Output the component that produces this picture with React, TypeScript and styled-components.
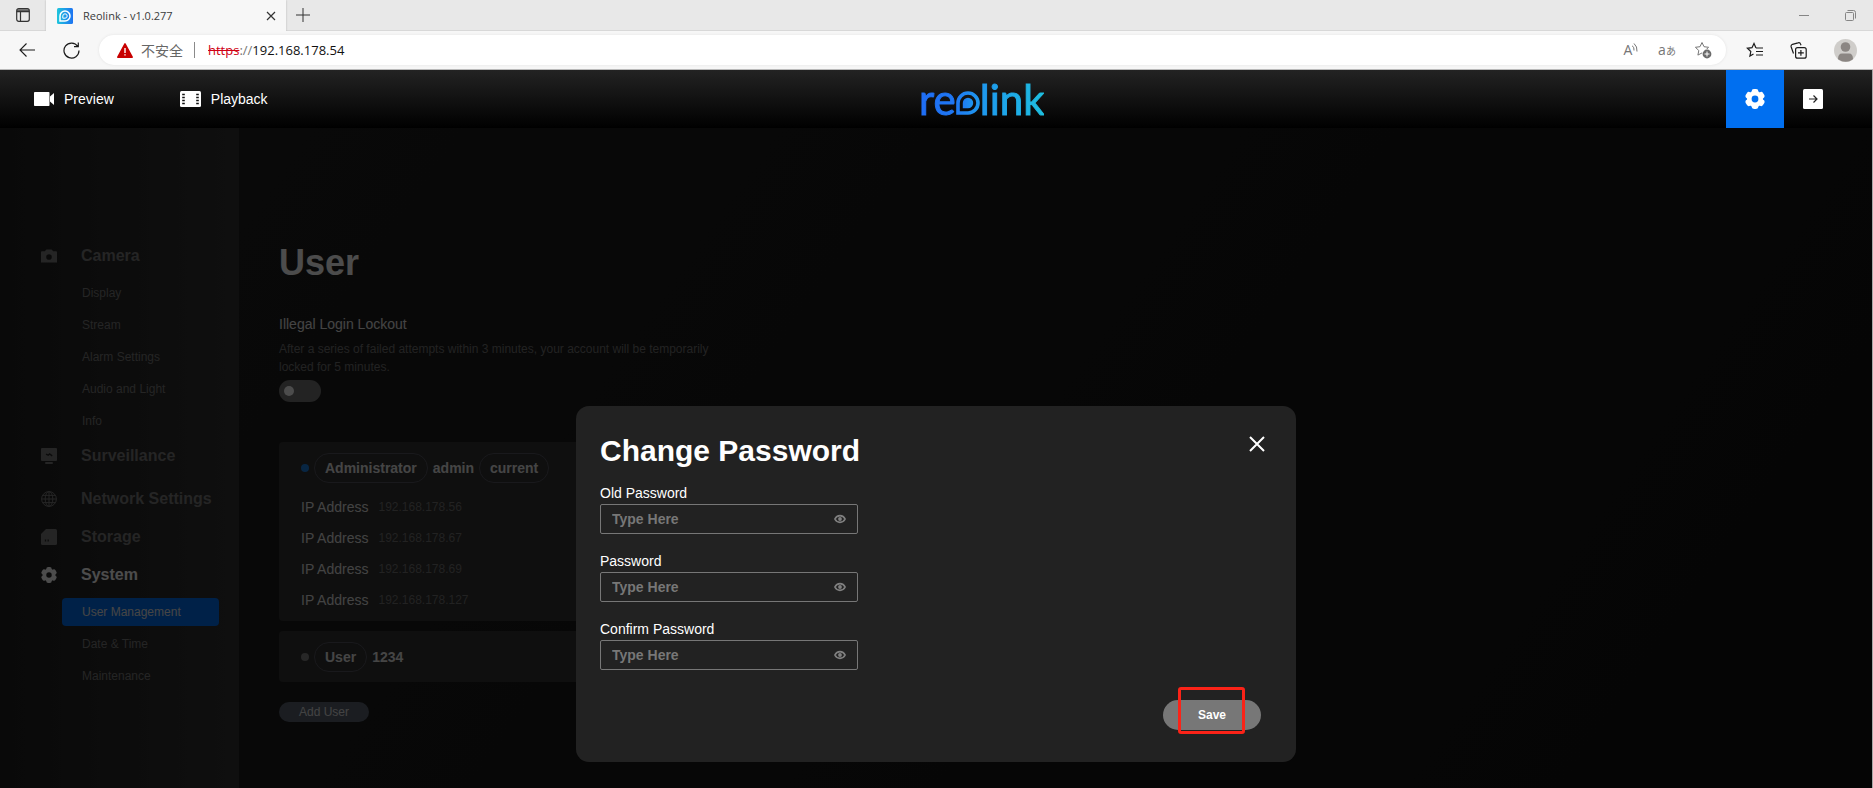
import React, { useId, useState } from "react";
import styled, { createGlobalStyle } from "styled-components";

const UI_FONT = '"Open Sans", "Noto Sans CJK SC", sans-serif';
const APP_FONT = '"Liberation Sans", Arial, sans-serif';

const GlobalStyle = createGlobalStyle`
  *, *::before, *::after { box-sizing: border-box; }
  body { margin: 0; background: #1c1c1c; font-family: ${APP_FONT}; }
  button, input { font-family: inherit; margin: 0; }
  h1, h2, p, ul { margin: 0; padding: 0; }
  li { list-style: none; }
  svg { display: block; flex: none; }
`;

const Window = styled.div`
  display: flex;
  flex-direction: column;
  min-height: 100vh;
`;

const Viewport = styled.div`
  flex: 1;
  display: flex;
  flex-direction: column;
  border-right: 1px solid #a8a8a8;
`;

const PlainButton = styled.button`
  display: flex;
  align-items: center;
  justify-content: center;
  padding: 0;
  border: 0;
  background: none;
  color: inherit;
`;

/* ---------- browser frame ---------- */

const TabStrip = styled.div`
  display: flex;
  height: 31px;
  background: #e8e8e8;
  box-shadow: inset 0 -1px #d8d8d8;
  font-family: ${UI_FONT};
  color: #3b3b3b;
`;

const StripButton = styled(PlainButton)<{ $width: number }>`
  width: ${(p) => p.$width}px;
  height: 30px;
`;

const Tab = styled.div`
  display: flex;
  align-items: center;
  gap: 10px;
  width: 240px;
  padding: 0 10px 0 11px;
  background: #f7f7f7;
  box-shadow: 0 0 2px #b4b4b4;
  clip-path: inset(0 -2px);
`;

const TabTitle = styled.span`
  flex: 1;
  font-size: 11px;
  line-height: 16px;
`;

const WindowControls = styled.div`
  display: flex;
  margin-left: auto;
  color: #858585;
`;

const Toolbar = styled.div`
  display: flex;
  align-items: center;
  height: 39px;
  padding-right: 3px;
  background: #f7f7f7;
  border-bottom: 1px solid #b9b9b9;
  font-family: ${UI_FONT};
  color: #1b1b1b;
`;

const ToolButton = styled(PlainButton)<{ $width?: number }>`
  width: ${(p) => p.$width ?? 44}px;
  height: 30px;
`;

const AddressBar = styled.div`
  display: flex;
  align-items: center;
  flex: 1;
  height: 30px;
  margin: 0 6px 0 10px;
  padding: 0 5px 0 18px;
  border-radius: 15px;
  background: #fff;
  box-shadow: 0 0 3px #e2e2e2;
  font-size: 13px;
  line-height: 18px;
  color: #767676;
`;

const Warning = styled.span`
  margin-left: 8px;
  padding-right: 11px;
  border-right: 1px solid #8a8a8a;
  font-family: "Noto Sans CJK SC", sans-serif;
  font-size: 14px;
  line-height: 16px;
  color: #666;
`;

const Url = styled.span`
  flex: 1;
  margin-left: 13px;
  color: #111;

  s { color: #d00014; }
  i { font-style: normal; color: #767676; }
`;

const Glyph = styled.span`
  font-size: 14px;
  line-height: 18px;

  small {
    font-family: "Noto Sans CJK JP", sans-serif;
    font-size: 10px;
  }
`;

/* ---------- application header ---------- */

const Header = styled.header`
  display: flex;
  align-items: center;
  height: 58px;
  padding: 0 30px 0 34px;
  background: linear-gradient(#232323, #000);
  color: #fff;
`;

const HeaderNav = styled.nav`
  display: flex;
  gap: 66px;
`;

const HeaderLink = styled.a`
  display: flex;
  align-items: center;
  gap: 10px;
  color: #fff;
  font-size: 14px;
  line-height: 20px;
  text-decoration: none;
`;

const Brand = styled.div`
  flex: 1;
  display: flex;
  align-items: baseline;
  justify-content: center;
  padding-right: 30px;
  font-family: Lato, sans-serif;
  font-size: 42px;
  line-height: 42px;
`;

const BrandText = styled.span<{ $from: string; $to: string }>`
  background: linear-gradient(90deg, ${(p) => p.$from}, ${(p) => p.$to});
  background-clip: text;
  color: transparent;
  -webkit-text-stroke: 1px transparent;
`;

const HeaderButton = styled(PlainButton)<{ $active?: boolean }>`
  width: 58px;
  height: 58px;
  background: ${(p) => (p.$active ? "#006ff0" : "none")};
`;

/* ---------- settings page ---------- */

const Body = styled.div`
  position: relative;
  flex: 1;
  display: flex;
  background: linear-gradient(125deg, #202020, #111);
`;

const Sidebar = styled.nav`
  flex: none;
  width: 239px;
  padding: 109px 20px 0 0;
  background: linear-gradient(90deg, #202020, #333);
`;

const Group = styled.section<{ $spaced?: boolean }>`
  padding-bottom: ${(p) => (p.$spaced ? 5 : 0)}px;
`;

const GroupLink = styled.a<{ $active?: boolean }>`
  display: flex;
  align-items: center;
  gap: 24px;
  height: 38px;
  padding-left: 41px;
  color: ${(p) => (p.$active ? "#fff" : "#7c7c7c")};
  font-size: 16px;
  font-weight: bold;
  line-height: 20px;
  text-decoration: none;
  white-space: nowrap;
`;

const SubList = styled.ul`
  padding: 2px 0 0 62px;
`;

const SubItem = styled.li`
  padding: 2px 0;
`;

const SubLink = styled.a<{ $active?: boolean }>`
  display: block;
  padding-left: 20px;
  border-radius: 4px;
  background: ${(p) => (p.$active ? "#006ff0" : "none")};
  color: ${(p) => (p.$active ? "#e8e8e8" : "#7c7c7c")};
  font-size: 12px;
  line-height: 28px;
  text-decoration: none;
`;

const Content = styled.main`
  flex: 1;
  min-width: 0;
  padding: 115px 40px 0;
  color: #fff;
`;

const PageTitle = styled.h1`
  font-size: 36px;
  line-height: 40px;
`;

const Setting = styled.div`
  max-width: 440px;
  margin-top: 31px;
`;

const SettingLabel = styled.label`
  display: block;
  font-size: 14px;
  line-height: 20px;
  margin-bottom: 6px;
  color: #e4e4e4;
`;

const SettingHint = styled.p`
  font-size: 12px;
  line-height: 18px;
  margin-bottom: 4px;
  color: #747474;
`;

const Toggle = styled.input`
  appearance: none;
  display: flex;
  align-items: center;
  width: 42px;
  height: 22px;
  padding: 0 5px;
  border-radius: 11px;
  background: #757575;

  &::before {
    content: "";
    width: 10px;
    height: 10px;
    border-radius: 5px;
    background: #fff;
  }
  &:checked { justify-content: flex-end; background: #006ff0; }
`;

const Cards = styled.div`
  display: flex;
  flex-direction: column;
  gap: 10px;
  max-width: 720px;
  margin: 40px 0 20px;
`;

const Card = styled.section`
  padding: 11px 22px 2px;
  border-radius: 4px;
  background: #323232;
`;

const CardHead = styled.div`
  display: flex;
  align-items: center;
  gap: 5px;
  height: 29px;
  margin-bottom: 9px;
  font-size: 14px;
  font-weight: bold;
  line-height: 20px;
  color: #e8e8e8;
`;

const Dot = styled.span<{ $online?: boolean }>`
  width: 8px;
  height: 8px;
  border-radius: 4px;
  background: ${(p) => (p.$online ? "#1d7fe0" : "#838383")};
`;

const Pill = styled.span`
  padding: 4px 10px;
  border: 1px solid #55555f;
  border-radius: 15px;
`;

const AddressList = styled.ul`
  padding-bottom: 4px;
`;

const AddressRow = styled.li`
  display: flex;
  align-items: center;
  gap: 10px;
  height: 31px;
  font-size: 14px;
  line-height: 20px;
  color: #e0e0e0;
`;

const AddressValue = styled.span`
  font-size: 12px;
  color: #747474;
`;

const AddUser = styled(PlainButton)`
  width: 90px;
  height: 20px;
  border-radius: 10px;
  background: #5a6270;
  color: #e0e0e0;
  font-size: 12px;
`;

/* ---------- dialog ---------- */

const Backdrop = styled.div`
  position: absolute;
  inset: 0;
  display: flex;
  justify-content: center;
  align-items: flex-end;
  padding: 0 0 26px;
  background: rgba(0, 0, 0, 0.7);
`;

const Dialog = styled.form`
  width: 720px;
  max-width: 100%;
  padding: 24px 35px 32px 24px;
  border-radius: 13px;
  background: #222;
  color: #fff;
`;

const DialogHead = styled.div`
  display: flex;
  justify-content: space-between;
  padding-right: 12px;
`;

const DialogTitle = styled.h2`
  font-size: 30px;
  line-height: 42px;
`;

const CloseButton = styled(PlainButton)`
  width: 32px;
  height: 28px;
  margin-right: -24px;
`;

const Fields = styled.div`
  display: flex;
  flex-direction: column;
  gap: 18px;
  width: 258px;
  margin: 12px 0 30px;
`;

const FieldLabel = styled.label`
  display: block;
  padding-bottom: 2px;
  font-size: 14px;
  line-height: 18px;
`;

const FieldBox = styled.div`
  display: flex;
  align-items: center;
  height: 30px;
  padding-left: 11px;
  border: 1px solid #777;
  border-radius: 2px;
`;

const FieldInput = styled.input`
  flex: 1;
  min-width: 0;
  padding: 0;
  border: 0;
  outline: 0;
  background: none;
  color: #fff;
  font-size: 14px;
  font-weight: bold;
  line-height: 20px;

  &::placeholder { color: #777; opacity: 1; }
`;

const EyeButton = styled(PlainButton)`
  width: 34px;
  height: 28px;
  color: #808080;
`;

const DialogFoot = styled.div`
  display: flex;
  justify-content: flex-end;
`;

const SaveWrap = styled.div`
  position: relative;
`;

const SaveButton = styled(PlainButton)`
  width: 98px;
  height: 30px;
  border-radius: 15px;
  background: #777;
  color: #fff;
  font-size: 12px;
  font-weight: bold;
`;

const Highlight = styled.span`
  position: absolute;
  inset: -13px 16px -4px 15px;
  border: 3px solid #fb2318;
  border-radius: 3px;
  pointer-events: none;
`;

/* ---------- drawings ---------- */

const GearIcon = ({ size, hole }: { size: number; hole: string }) => (
  <svg width={size} height={size} viewBox="0 0 20 20" fill="currentColor">
    <circle cx="10" cy="10" r="8" />
    {[0, 60, 120].map((a) => (
      <rect key={a} x="6.6" y="0" width="6.800" height="20" rx="2.400" transform={`rotate(${a} 10 10)`} />
    ))}
    <circle cx="10" cy="10" r="3.4" fill={hole} />
  </svg>
);

const CameraIcon = () => (
  <svg width="16" height="16" viewBox="0 0 16 16" fill="currentColor">
    <path fillRule="evenodd" d="M0 4.2Q0 3.2 1 3.2h2.8L5.4 1.4h5.2l1.6 1.8H15q1 0 1 1V14.4H0zM8 6.2a2.8 2.8 0 1 0 0 5.6 2.8 2.8 0 0 0 0-5.6z" />
  </svg>
);

const MonitorIcon = () => (
  <svg width="16" height="16" viewBox="0 0 16 16">
    <rect width="16" height="13" rx="1" fill="currentColor" />
    <rect x="4" y="14" width="8" height="2" rx="1" fill="currentColor" />
    <path d="M5 6.2l2.2 1L8.6 6l2.6 1.8" fill="none" stroke="#262626" strokeWidth="1.4" />
  </svg>
);

const GlobeIcon = () => (
  <svg width="16" height="16" viewBox="0 0 16 16" fill="none" stroke="currentColor">
    <circle cx="8" cy="8" r="7.4" />
    <ellipse cx="8" cy="8" rx="3.8" ry="7.4" />
    <path d="M8 .6v14.8M.6 8h14.8M1.8 4.4h12.4M1.8 11.6h12.4" />
  </svg>
);

const StorageIcon = () => (
  <svg width="16" height="16" viewBox="0 0 16 16">
    <path d="M5 0h9.5Q16 0 16 1.5v13q0 1.500-1.500 1.500h-13Q0 16 0 14.500V5z" fill="currentColor" />
    <path d="M4.500 10.500v2M7.200 10.500v2" stroke="#262626" strokeWidth="1.300" />
  </svg>
);

const VideoIcon = () => (
  <svg width="20" height="14" viewBox="0 0 20 14" fill="currentColor">
    <rect width="15.500" height="14" rx=".8" />
    <path d="M16 4.500 20 1v12l-4-3.500z" />
  </svg>
);

const FilmIcon = () => (
  <svg width="21" height="16" viewBox="0 0 21 16">
    <rect width="21" height="16" rx="1.500" fill="currentColor" />
    <path d="M2.200 3.500h2.600M2.200 6.500h2.600M2.200 9.500h2.600M2.200 12.500h2.600M16.200 3.500h2.600M16.200 6.500h2.600M16.200 9.500h2.600M16.200 12.500h2.600" stroke="#111" strokeWidth="1.600" />
  </svg>
);

const LogoutIcon = () => (
  <svg width="20" height="20" viewBox="0 0 20 20">
    <rect width="20" height="20" rx="1.500" fill="#fff" />
    <path d="M6 10h8M10.500 6.500 14 10l-3.500 3.500" fill="none" stroke="#222" strokeWidth="1.200" />
  </svg>
);

const EyeIcon = () => (
  <svg width="12" height="10" viewBox="0 0 12 10" fill="none" stroke="currentColor">
    <path d="M.9 5C3 .6 9 .6 11.100 5 9 9.400 3 9.400.9 5z" strokeWidth="1.700" />
    <circle cx="6" cy="5" r="1.900" fill="currentColor" stroke="none" />
  </svg>
);

const BrandMark = () => (
  <svg width="24" height="24" viewBox="0 0 24 24">
    <defs>
      <linearGradient id="mark" x1="0" x2="1">
        <stop offset="0" stopColor="#1f7cf3" />
        <stop offset="1" stopColor="#1f97ee" />
      </linearGradient>
    </defs>
    <path d="M2 22V12a10 10 0 1 1 10 10z" fill="none" stroke="url(#mark)" strokeWidth="3.600" />
    <path d="M6.800 17.200V12A5.200 5.200 0 1 1 12 17.200z" fill="url(#mark)" />
  </svg>
);

const Favicon = () => (
  <svg width="16" height="16" viewBox="0 0 16 16">
    <defs>
      <linearGradient id="fav" x1="0" x2="1">
        <stop offset="0" stopColor="#1fc6dc" />
        <stop offset="1" stopColor="#1e73f2" />
      </linearGradient>
    </defs>
    <rect width="16" height="16" rx="1.500" fill="url(#fav)" />
    <path d="M3 13V8a5 5 0 1 1 5 5z" fill="none" stroke="#fff" strokeWidth="1.500" />
    <path d="M5.800 10.200V8A2.200 2.200 0 1 1 8 10.200z" fill="none" stroke="#fff" />
  </svg>
);

const STAR = "M8 1.500l2 4.200 4.600.6-3.400 3.200.9 4.600L8 11.900l-4.100 2.200.9-4.600L1.400 6.300 6 5.700z";

/* ---------- data ---------- */

const MENU = [
  { label: "Camera", icon: <CameraIcon />, items: ["Display", "Stream", "Alarm Settings", "Audio and Light", "Info"] },
  { label: "Surveillance", icon: <MonitorIcon />, items: [], spaced: true },
  { label: "Network Settings", icon: <GlobeIcon />, items: [] },
  { label: "Storage", icon: <StorageIcon />, items: [] },
  { label: "System", icon: <GearIcon size={16} hole="#262626" />, items: ["User Management", "Date & Time", "Maintenance"], active: true },
];

const ADDRESSES = ["192.168.178.56", "192.168.178.67", "192.168.178.69", "192.168.178.127"];

function BrowserFrame() {
  return (
    <>
      <TabStrip>
        <StripButton $width={46} aria-label="Tab actions">
          <svg width="14" height="14" viewBox="0 0 14 14" fill="none" stroke="#333" strokeWidth="1.200">
            <rect x=".7" y=".7" width="12.600" height="12.600" rx="2" />
            <path d="M.7 3.600h12.600M4.500 3.600v9.700M1 2.200h12" />
          </svg>
        </StripButton>
        <Tab>
          <Favicon />
          <TabTitle>Reolink - v1.0.277</TabTitle>
          <PlainButton aria-label="Close tab">
            <svg width="10" height="10" viewBox="0 0 10 10" stroke="#333" strokeWidth="1.200">
              <path d="M1 1l8 8M9 1l-8 8" />
            </svg>
          </PlainButton>
        </Tab>
        <StripButton $width={34} aria-label="New tab">
          <svg width="14" height="14" viewBox="0 0 14 14" stroke="#333">
            <path d="M7 0v14M0 7h14" />
          </svg>
        </StripButton>
        <WindowControls>
          <StripButton $width={46} aria-label="Minimize">
            <svg width="10" height="10" viewBox="0 0 10 10" stroke="currentColor">
              <path d="M0 5.500h10" />
            </svg>
          </StripButton>
          <StripButton $width={46} aria-label="Restore">
            <svg width="11" height="11" viewBox="0 0 11 11" fill="none" stroke="currentColor">
              <rect x=".5" y="2.500" width="8" height="8" rx="1" />
              <path d="M2.500.5H8.500Q10.500.5 10.500 2.500V8.500" />
            </svg>
          </StripButton>
        </WindowControls>
      </TabStrip>
      <Toolbar>
        <ToolButton $width={54} aria-label="Back">
          <svg width="16" height="14" viewBox="0 0 16 14" fill="none" stroke="currentColor" strokeWidth="1.100">
            <path d="M16 7H.8M7.500.5 1 7l6.500 6.500" />
          </svg>
        </ToolButton>
        <ToolButton $width={35} aria-label="Refresh">
          <svg width="17" height="17" viewBox="0 0 17 17" fill="none" stroke="currentColor" strokeWidth="1.200">
            <path d="M14.800 4.500A7.500 7.500 0 1 0 16 8.500M15.300.5V4.700H11" />
          </svg>
        </ToolButton>
        <AddressBar>
          <svg width="16" height="15" viewBox="0 0 16 15">
            <path d="M8 .8 15.200 14.200H.8z" fill="#c80000" stroke="#c80000" strokeWidth="1.500" strokeLinejoin="round" />
            <path d="M8 5v5M8 11.200v1.400" stroke="#fff" strokeWidth="1.400" />
          </svg>
          <Warning>不安全</Warning>
          <Url><s>https</s><i>://</i>192.168.178.54</Url>
          <ToolButton $width={36} aria-label="Read aloud">
            <Glyph>A</Glyph>
            <svg width="6" height="14" viewBox="0 0 6 14" fill="none" stroke="#767676">
              <path d="M0 2.500q2.500 2 2 5M2 .5q3.500 3 3 8" />
            </svg>
          </ToolButton>
          <ToolButton $width={36} aria-label="Translate">
            <Glyph>a<small>あ</small></Glyph>
          </ToolButton>
          <ToolButton $width={36} aria-label="Add to favorites">
            <svg width="18" height="18" viewBox="0 0 18 18" fill="none" stroke="#767676">
              <path d={STAR} />
              <circle cx="13" cy="13" r="5" fill="#fff" stroke="none" />
              <circle cx="13" cy="13" r="4.400" fill="#6a6a6a" stroke="none" />
              <path d="M13 10.500v5M10.500 13h5" stroke="#fff" />
            </svg>
          </ToolButton>
        </AddressBar>
        <ToolButton aria-label="Favorites">
          <svg width="17" height="16" viewBox="0 0 17 16" fill="none" stroke="currentColor" strokeWidth="1.200">
            <path d="M10 6 8 1.500 6 5.700l-4.600.6 3.400 3.200-.9 4.600L7.500 12M10 6h7M10 9.500h7M10 13h7" />
          </svg>
        </ToolButton>
        <ToolButton aria-label="Collections">
          <svg width="17" height="17" viewBox="0 0 17 17" fill="none" stroke="currentColor" strokeWidth="1.200">
            <rect x="5.600" y="5.600" width="10.600" height="10.600" rx="2" />
            <path d="M10.900 8v5.800M8 10.900h5.800M3.500 11.500 1.200 5Q.6 3 2.500 2.300L8 .9q2-.6 2.500 1l.5 1.400" />
          </svg>
        </ToolButton>
        <ToolButton $width={50} aria-label="Profile">
          <svg width="23" height="23" viewBox="0 0 23 23">
            <circle cx="11.500" cy="11.500" r="11.500" fill="#cfcdca" />
            <circle cx="11.500" cy="8" r="4.800" fill="#8b8683" />
            <path d="M4 20.300Q4 14.500 8 14.500h7q4 0 4 5.800-7 5-15 0z" fill="#8b8683" />
          </svg>
        </ToolButton>
      </Toolbar>
    </>
  );
}

function PasswordField({ label }: { label: string }) {
  const id = useId();
  const [shown, setShown] = useState(false);
  return (
    <div>
      <FieldLabel htmlFor={id}>{label}</FieldLabel>
      <FieldBox>
        <FieldInput id={id} type={shown ? "text" : "password"} placeholder="Type Here" />
        <EyeButton type="button" aria-label="Show password" onClick={() => setShown(!shown)}>
          <EyeIcon />
        </EyeButton>
      </FieldBox>
    </div>
  );
}

export default function App() {
  return (
    <Window>
      <GlobalStyle />
      <BrowserFrame />
      <Viewport>
        <Header>
          <HeaderNav>
            <HeaderLink href="#preview"><VideoIcon />Preview</HeaderLink>
            <HeaderLink href="#playback"><FilmIcon />Playback</HeaderLink>
          </HeaderNav>
          <Brand>
            <BrandText $from="#1f6df5" $to="#1f78f3">re</BrandText>
            <BrandMark />
            <BrandText $from="#1e96ee" $to="#1ebfe0">link</BrandText>
          </Brand>
          <HeaderButton $active aria-label="Settings"><GearIcon size={20} hole="#006ff0" /></HeaderButton>
          <HeaderButton aria-label="Log out"><LogoutIcon /></HeaderButton>
        </Header>
        <Body>
          <Sidebar>
            {MENU.map((group) => (
              <Group key={group.label} $spaced={group.spaced}>
                <GroupLink href="#" $active={group.active}>{group.icon}{group.label}</GroupLink>
                {group.items.length > 0 && (
                  <SubList>
                    {group.items.map((item) => (
                      <SubItem key={item}>
                        <SubLink href="#" $active={item === "User Management"}>{item}</SubLink>
                      </SubItem>
                    ))}
                  </SubList>
                )}
              </Group>
            ))}
          </Sidebar>
          <Content>
            <PageTitle>User</PageTitle>
            <Setting>
              <SettingLabel htmlFor="lockout">Illegal Login Lockout</SettingLabel>
              <SettingHint>
                After a series of failed attempts within 3 minutes, your account will be temporarily locked for 5 minutes.
              </SettingHint>
              <Toggle id="lockout" type="checkbox" />
            </Setting>
            <Cards>
              <Card>
                <CardHead>
                  <Dot $online />
                  <Pill>Administrator</Pill>
                  admin
                  <Pill>current</Pill>
                </CardHead>
                <AddressList>
                  {ADDRESSES.map((ip) => (
                    <AddressRow key={ip}>
                      IP Address
                      <AddressValue>{ip}</AddressValue>
                    </AddressRow>
                  ))}
                </AddressList>
              </Card>
              <Card>
                <CardHead>
                  <Dot />
                  <Pill>User</Pill>
                  1234
                </CardHead>
              </Card>
            </Cards>
            <AddUser>Add User</AddUser>
          </Content>
          <Backdrop>
            <Dialog role="dialog" aria-label="Change Password" onSubmit={(e) => e.preventDefault()}>
              <DialogHead>
                <DialogTitle>Change Password</DialogTitle>
                <CloseButton type="button" aria-label="Close">
                  <svg width="16" height="16" viewBox="0 0 16 16" stroke="#fff" strokeWidth="2">
                    <path d="M1 1l14 14M15 1 1 15" />
                  </svg>
                </CloseButton>
              </DialogHead>
              <Fields>
                <PasswordField label="Old Password" />
                <PasswordField label="Password" />
                <PasswordField label="Confirm Password" />
              </Fields>
              <DialogFoot>
                <SaveWrap>
                  <SaveButton type="submit">Save</SaveButton>
                  <Highlight />
                </SaveWrap>
              </DialogFoot>
            </Dialog>
          </Backdrop>
        </Body>
      </Viewport>
    </Window>
  );
}
